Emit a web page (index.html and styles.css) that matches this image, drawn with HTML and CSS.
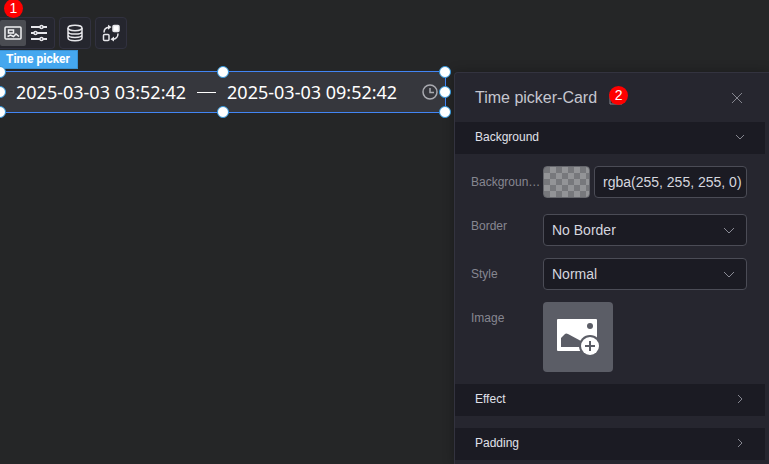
FILE: index.html
```html
<!DOCTYPE html>
<html lang="en">
<head>
<meta charset="utf-8">
<meta name="viewport" content="width=device-width, initial-scale=1">
<title>Time picker-Card</title>
<link rel="stylesheet" href="styles.css">
</head>
<body>
<div class="editor">
  <main class="stage">
    <div class="toolbar">
      <div class="tool-group first">
        <button class="tool active" type="button" aria-label="Card">
          <svg width="18" height="16" viewBox="0 0 18 16" fill="none" stroke="#f0f0f2" stroke-width="1.500"><rect x="1" y="2" width="16" height="12" rx="1"/><path d="M4.500 5h5v3h-5z"/><path d="M3.500 11.500l3-1.500 3 1.500 2.500-2.500 3 2.500"/></svg>
        </button>
        <button class="tool" type="button" aria-label="Settings">
          <svg width="18" height="18" viewBox="0 0 18 18" fill="none" stroke="#e6e6ea" stroke-width="2"><path d="M1 3h9M13 3h4M1 9h3M7 9h10M1 15h9M13 15h4"/><circle cx="11.500" cy="3" r="1.500" stroke-width="1.500"/><circle cx="5.500" cy="9" r="1.500" stroke-width="1.500"/><circle cx="11.500" cy="15" r="1.500" stroke-width="1.500"/></svg>
        </button>
        <span class="badge step-one">1</span>
      </div>
      <div class="tool-group">
        <button class="tool" type="button" aria-label="Data">
          <svg width="18" height="18" viewBox="0 0 18 18" fill="none" stroke="#e6e6ea" stroke-width="1.500"><ellipse cx="9" cy="4" rx="7" ry="2.700"/><path d="M2 4v10c0 1.500 3.100 2.700 7 2.700s7-1.200 7-2.700V4M2 7.400c0 1.500 3.100 2.700 7 2.700s7-1.200 7-2.700M2 10.700c0 1.500 3.100 2.700 7 2.700s7-1.200 7-2.700"/></svg>
        </button>
      </div>
      <div class="tool-group">
        <button class="tool" type="button" aria-label="Interaction">
          <svg width="18" height="18" viewBox="0 0 18 18" fill="none" stroke="#e6e6ea" stroke-width="1.500"><rect x="11" y="1.500" width="6" height="6" rx="1" fill="#fff"/><rect x="1.500" y="10.500" width="5.500" height="6" rx="1"/><path d="M2 8.500c0-3 2-5 5-5.300M16 9.500c0 3-2 5.500-5 5.800"/><path d="M6 .8l3.500 2.200L6 5.800zM12 12.500l-3.500 2.800 3.500 2.200z" fill="#e6e6ea" stroke="none"/></svg>
        </button>
      </div>
    </div>
    <div class="tag">Time picker</div>
    <div class="picker">
      <span>2025-03-03 03:52:42</span>
      <span class="dash"></span>
      <span>2025-03-03 09:52:42</span>
      <svg class="clock" width="16" height="16" viewBox="0 0 16 16" fill="none" stroke="#a9aab0" stroke-width="1.500"><circle cx="8" cy="8" r="7"/><path d="M8 4v4.500h4"/></svg>
      <i class="handle top left"></i><i class="handle top center"></i><i class="handle top right"></i>
      <i class="handle middle left"></i><i class="handle middle right"></i>
      <i class="handle bottom left"></i><i class="handle bottom center"></i><i class="handle bottom right"></i>
    </div>
  </main>

  <aside class="panel">
    <header class="panel-head">
      <h1>Time picker-Card</h1>
      <span class="edit"><svg width="14" height="14" viewBox="0 0 14 14" fill="none" stroke="#85868e"><path d="M1 3v10h12V9"/></svg><span class="badge step-two">2</span></span>
      <button class="close" type="button" aria-label="Close"><svg width="12" height="12" viewBox="0 0 12 12" fill="none" stroke="#85868f"><path d="M1 1l10 10M11 1L1 11"/></svg></button>
    </header>
    <button class="section" type="button" aria-expanded="true">Background
      <svg width="10" height="10" viewBox="0 0 10 10" fill="none" stroke="#85868f"><path d="M1 3l4 4 4-4"/></svg>
    </button>
    <form class="fields">
      <div class="row">
        <label for="color">Backgroun…</label>
        <div class="control color">
          <button class="swatch" type="button" aria-label="Pick color"></button>
          <input class="box" id="color" type="text" value="rgba(255, 255, 255, 0)">
        </div>
      </div>
      <div class="row">
        <label for="border">Border</label>
        <div class="control select lowered">
          <select class="box" id="border"><option>No Border</option></select>
          <svg width="12" height="12" viewBox="0 0 12 12" fill="none" stroke="#8a8b95"><path d="M1 3l5 5 5-5"/></svg>
        </div>
      </div>
      <div class="row">
        <label for="style">Style</label>
        <div class="control select">
          <select class="box" id="style"><option>Normal</option></select>
          <svg width="12" height="12" viewBox="0 0 12 12" fill="none" stroke="#8a8b95"><path d="M1 3l5 5 5-5"/></svg>
        </div>
      </div>
      <div class="row">
        <label for="image">Image</label>
        <button class="upload" id="image" type="button" aria-label="Add image">
          <svg width="44" height="40" viewBox="0 0 44 40"><rect x="1" y="2" width="40" height="32" rx="1" fill="#fff"/><circle cx="34" cy="9" r="3" fill="#5b5d66"/><path d="M5 30V21l4-4q1-1 3 0l13 7v6z" fill="#5b5d66"/><circle cx="34" cy="29" r="11" fill="#5b5d66"/><circle cx="34" cy="29" r="9" fill="#fff"/><path d="M34 24v10M29 29h10" stroke="#5b5d66" stroke-width="2"/></svg>
        </button>
      </div>
    </form>
    <button class="section" type="button" aria-expanded="false">Effect
      <svg width="10" height="10" viewBox="0 0 10 10" fill="none" stroke="#85868f"><path d="M3 1l4 4-4 4"/></svg>
    </button>
    <button class="section spaced" type="button" aria-expanded="false">Padding
      <svg width="10" height="10" viewBox="0 0 10 10" fill="none" stroke="#85868f"><path d="M3 1l4 4-4 4"/></svg>
    </button>
  </aside>
</div>
</body>
</html>
```
FILE: styles.css
```css
* {
  box-sizing: border-box;
}

body {
  margin: 0;
  background: #252627;
  color: #d5d6de;
  font-family: "Liberation Sans", Arial, sans-serif;
  font-size: 12px;
  overflow: hidden;
}

button,
input,
select {
  margin: 0;
  font-family: inherit;
}

svg {
  display: block;
  flex: none;
}

.editor {
  display: grid;
  grid-template-columns: minmax(0, 1fr) 315px;
  min-height: 100vh;
}

.stage {
  padding: 17px 8px 0 0;
}

.toolbar {
  display: flex;
  gap: 4px;
}

.tool-group {
  position: relative;
  display: flex;
  padding: 2px;
  border: 1px solid #31313f;
  border-radius: 4px;
  background: #25262e;
}

.tool-group.first {
  padding-left: 0;
  border-left: 0;
  border-radius: 0 4px 4px 0;
}

.tool {
  display: grid;
  place-items: center;
  width: 26px;
  height: 26px;
  padding: 0;
  border: 0;
  border-radius: 2px;
  background: none;
}

.tool.active {
  background: #4a4c52;
}

.badge {
  position: absolute;
  width: 19px;
  height: 19px;
  border-radius: 50%;
  background: #fe0000;
  color: #fff;
  font-size: 14px;
  line-height: 18px;
  text-align: center;
}

.step-one {
  left: 4px;
  top: -19px;
}

.step-two {
  left: 0;
  top: -5px;
}

.tag {
  width: max-content;
  margin-top: 1px;
  padding: 0 7px 0 6px;
  border: 1px solid #3991d2;
  border-left: 0;
  background: #45a7ef;
  color: #fff;
  font-family: Roboto, sans-serif;
  font-weight: bold;
  line-height: 17px;
}

.picker {
  position: relative;
  display: flex;
  align-items: center;
  gap: 11px;
  height: 42px;
  margin-top: 2px;
  padding: 0 7px 0 16px;
  border: 1px solid #4285f4;
  border-left: 0;
  background: #36373d;
  color: #fff;
  font-family: "Noto Sans", sans-serif;
  font-size: 18px;
  white-space: nowrap;
}

.dash {
  width: 19px;
  height: 1px;
  background: #fff;
}

.clock {
  margin-left: auto;
}

.handle {
  position: absolute;
  width: 12px;
  height: 12px;
  border: 1px solid #3196dc;
  border-radius: 50%;
  background: #fff;
  transform: translate(-50%, -50%);
}

.top { top: 0; }
.middle { top: 50%; }
.bottom { top: 100%; }
.left { left: 0; }
.center { left: 50%; }
.right { left: 100%; }

.panel {
  margin-top: 72px;
  border: 1px solid #33333f;
  border-width: 1px 0 0 1px;
  border-radius: 4px 0 0 0;
  background: #26262f;
  box-shadow: 0 0 12px rgba(0, 0, 0, 0.3);
}

.panel-head {
  display: flex;
  align-items: center;
  height: 49px;
  padding: 0 26px 0 20px;
}

h1 {
  margin: 0;
  color: #c5c6d0;
  font-size: 16px;
  font-weight: normal;
}

.edit {
  position: relative;
  margin-left: 12px;
}

.close {
  margin-left: auto;
  padding: 0;
  border: 0;
  background: none;
}

.section {
  display: flex;
  align-items: center;
  justify-content: space-between;
  width: calc(100% - 4px);
  height: 32px;
  padding: 0 20px 2px;
  border: 0;
  background: #1b1b23;
  color: #e0e1ea;
  font-size: 12px;
}

.spaced {
  margin-top: 12px;
}

.fields {
  display: grid;
  gap: 12px;
  padding: 12px 22px 12px 16px;
}

.row {
  display: grid;
  grid-template-columns: 72px minmax(0, 1fr);
  align-items: start;
}

.row label {
  color: #868791;
  line-height: 32px;
  white-space: nowrap;
}

.control {
  display: flex;
  gap: 4px;
}

.lowered {
  margin-top: 4px;
}

.select {
  position: relative;
}

.select svg {
  position: absolute;
  top: 11px;
  right: 12px;
  pointer-events: none;
}

.box {
  flex: 1;
  min-width: 0;
  height: 32px;
  padding: 0 8px;
  border: 1px solid #4b4c56;
  border-radius: 4px;
  background: #1b1b23;
  color: #d5d6df;
  font-size: 14px;
  appearance: none;
}

.color .box {
  padding-right: 0;
}

.swatch {
  width: 47px;
  height: 32px;
  padding: 0;
  border: 1px solid #65666c;
  border-radius: 4px;
  background: repeating-conic-gradient(#939497 0 25%, #77787c 0 50%) 0 0 / 12px 12px;
}

.upload {
  display: grid;
  place-items: center;
  width: 70px;
  height: 70px;
  padding: 0;
  border: 0;
  border-radius: 4px;
  background: #5b5d66;
}
```
